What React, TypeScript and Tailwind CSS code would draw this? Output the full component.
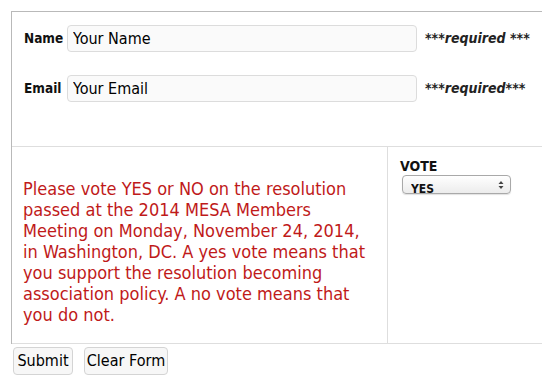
const font = { fontFamily: '"DejaVu Sans Condensed", "DejaVu Sans", sans-serif' };

function Field({ label, placeholder, note }: { label: string; placeholder: string; note: string }) {
  return (
    <div className="flex items-center">
      <label className="w-[43px] text-[13.5px] font-bold text-[#111]">{label}</label>
      <input
        defaultValue={placeholder}
        className="h-[27px] w-[350px] rounded-[4px] border border-[#dcdcdc] bg-[#fafafa] px-[5px] text-[16px] text-black outline-none"
      />
      <span className="ml-[8px] text-[14px] italic font-semibold text-[#222]">{note}</span>
    </div>
  );
}

export default function App() {
  return (
    <div className="h-[383px] w-[542px] overflow-hidden bg-white" style={font}>
      <form className="ml-[11px] mt-[11px]">
        <div className="border-l border-t border-[#b9b9b9]">
          <div className="flex h-[134px] flex-col gap-[23px] pl-[12px] pt-[13px]">
            <Field label="Name" placeholder="Your Name" note="***required ***" />
            <Field label="Email" placeholder="Your Email" note="***required***" />
          </div>
          <div className="flex h-[198px] border-y border-[#dedede]">
            <div className="flex w-[376px] items-center border-r border-[#dedede] pl-[11px] pr-[14px] pt-[13px]">
              <p className="text-[18px] leading-[21px] text-[#bf1a1a]">
                Please vote YES or NO on the resolution passed at the 2014 MESA Members Meeting on
                Monday, November 24, 2014, in Washington, DC. A yes vote means that you support the
                resolution becoming association policy. A no vote means that you do not.
              </p>
            </div>
            <div className="flex-1 pl-[12px] pt-[11px]">
              <div className="text-[14px] font-bold leading-[16px] text-[#111]">VOTE</div>
              <div className="relative ml-[2px] mt-[1px] h-[19px] w-[109px] rounded-[4px] border border-[#a9a9a9] bg-gradient-to-b from-white to-[#ececec] shadow-[0_1px_1px_rgba(0,0,0,0.12)]">
                <select className="h-full w-full appearance-none bg-transparent pl-[8px] text-[12px] font-bold leading-[17px] text-[#111] outline-none">
                  <option>YES</option>
                  <option>NO</option>
                </select>
                <svg
                  className="pointer-events-none absolute right-[6px] top-[4px]"
                  width="6"
                  height="10"
                  viewBox="0 0 6 10"
                >
                  <path d="M0.5 4 L3 1 L5.5 4 Z" fill="#444" />
                  <path d="M0.5 6 L3 9 L5.5 6 Z" fill="#444" />
                </svg>
              </div>
            </div>
          </div>
        </div>
        <div className="mt-[3px] flex gap-[11px] pl-[2px]">
          <button
            type="button"
            className="h-[28px] w-[60px] rounded-[4px] border border-[#d4d4d4] bg-[#f7f7f7] text-[16px] text-black"
          >
            Submit
          </button>
          <button
            type="button"
            className="h-[28px] w-[84px] rounded-[4px] border border-[#d4d4d4] bg-[#f7f7f7] text-[16px] text-black"
          >
            Clear Form
          </button>
        </div>
      </form>
    </div>
  );
}
